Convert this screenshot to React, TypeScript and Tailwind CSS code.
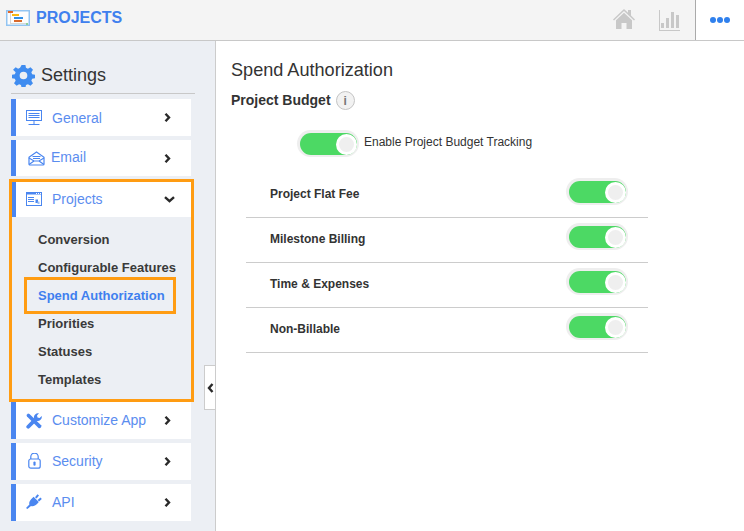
import type { ReactNode } from "react";

const Gantt = () => (
  <svg width="24" height="16" viewBox="0 0 24 16" className="shrink-0">
    <rect x="0.75" y="0.75" width="22.5" height="14.5" fill="#fdfdfd" stroke="#93c5f2" strokeWidth="1.5" />
    <rect x="2" y="1" width="5" height="2" fill="#e0672b" />
    <rect x="6" y="4" width="7" height="2" fill="#f7b916" />
    <rect x="8" y="7" width="9" height="2" fill="#2f8fe8" />
    <rect x="8" y="10" width="8" height="2" fill="#d9692b" />
    <rect x="4" y="3" width="1" height="10" fill="#d5d5d5" />
    <rect x="4" y="13" width="16" height="1" fill="#d5d9d5" />
    <rect x="20" y="13" width="2" height="2" fill="#8fd09a" />
  </svg>
);

const Monitor = () => (
  <svg width="16" height="15" viewBox="0 0 16 15" fill="none" stroke="#4a86f0">
    <rect x="0.5" y="0.5" width="15" height="10" strokeWidth="1" />
    <path d="M2.5 3.5h11M2.5 5.5h11M2.5 7.5h11M8 11v3M2.5 14.5h11" />
  </svg>
);

const Mail = () => (
  <svg width="17" height="15" viewBox="0 0 17 15" fill="none" stroke="#4a86f0" strokeWidth="1.2" className="ml-[4px]">
    <path d="M1 6.2 8.5 1 16 6.2V13a1 1 0 0 1-1 1H2a1 1 0 0 1-1-1Z" />
    <path d="M1 7 6 10h5l5-3M1 13.5 6 10M16 13.5 11 10M4.5 5.5h8M5 7.5h7" />
  </svg>
);

const Browser = () => (
  <svg width="16" height="14" viewBox="0 0 16 14" fill="none" stroke="#4a86f0" className="mb-[2px]">
    <rect x="0.5" y="0.5" width="15" height="13" />
    <path d="M0 1.5h16" strokeWidth="2" />
    <path d="M10 1.5h1M12 1.5h1M14 1.5h1" stroke="#fff" />
    <path d="M2 5.5h6M2 7.5h6M2 9.5h6" />
    <path d="M9.5 7.5h2.5v3.5h-2.5Z" fill="#4a86f0" stroke="none" />
    <path d="M11.5 9.5h2v2.5h-2Z" fill="#9cc0f5" stroke="none" />
  </svg>
);

const Tools = () => (
  <svg width="16" height="16" viewBox="0 0 16 16" fill="#4a86f0">
    <path d="M.5 2 2 .5l1.5.5 11.6 11.2a2 2 0 0 1-2.6 2.8L1 3.5Z" />
    <path d="M15.7 3 13.6 5 11.5 4.5 11 2.4 13 .3A4.2 4.2 0 0 0 8 5.3L.9 12.4a1.9 1.9 0 0 0 2.7 2.7l7.1-7.1A4.2 4.2 0 0 0 15.7 3Z" />
  </svg>
);

const Lock = () => (
  <svg width="13" height="16" viewBox="0 0 13 16" fill="none" stroke="#4a86f0" strokeWidth="1.2" className="mb-[1px]">
    <rect x="0.8" y="6" width="11.4" height="9.2" rx="2" />
    <path d="M2.8 6V3.8a3.7 3.7 0 0 1 7.4 0V6" />
    <path d="M6.5 9.5v2.2" strokeWidth="2.2" strokeLinecap="round" />
  </svg>
);

const Plug = () => (
  <svg width="16" height="15" viewBox="0 0 16 15" fill="#4a86f0" className="mb-[2px]">
    <path d="M0 14 3.4 10.6C2.8 8 4 6 7.6 2.8l5.2 5.2c-3 3.6-5.4 4.8-7.8 4.1L1.4 15Z" />
    <path d="M9 3.2 11.5 0.3 13 1.5 10.6 4.6ZM11.6 6 14.5 3.5 15.8 5 13.1 7.6Z" />
  </svg>
);

const ArrowRight = () => (
  <svg width="7" height="9" viewBox="0 0 7 9" fill="none" stroke="#2a2a2a" strokeWidth="2.4">
    <path d="M1.5 .8 5 4.5 1.5 8.2" />
  </svg>
);

const ArrowDown = () => (
  <svg width="11" height="7" viewBox="0 0 11 7" fill="none" stroke="#2a2a2a" strokeWidth="2.4">
    <path d="M1 1.2 5.5 5.2 10 1.2" />
  </svg>
);

const Row = ({
  icon,
  label,
  open,
  className = "h-[37px]",
  labelClass = "",
}: {
  icon: ReactNode;
  label: string;
  open?: boolean;
  className?: string;
  labelClass?: string;
}) => (
  <div className={`flex items-center border-[#4a86f0] bg-white ${className}`}>
    <span className="flex w-[36px] shrink-0 justify-center">{icon}</span>
    <span className={`text-[14px] text-[#5b8def] ${labelClass}`}>{label}</span>
    <span className={`ml-auto flex ${open ? "mr-[16px]" : "mr-[20px]"}`}>{open ? <ArrowDown /> : <ArrowRight />}</span>
  </div>
);

const Toggle = () => (
  <div className="h-[27px] w-[62px] rounded-full bg-[#eeeeee] pb-[2px] pl-[3px] pr-[2px] pt-[3px]">
    <div className="flex h-full items-center justify-end rounded-full bg-[#4cd964]">
      <div className="h-[21px] w-[21px] rounded-full border-[3px] border-white bg-[#efefef]" />
    </div>
  </div>
);

const subItems = ["Conversion", "Configurable Features", "Spend Authorization", "Priorities", "Statuses", "Templates"];
const budgetRows = ["Project Flat Fee", "Milestone Billing", "Time & Expenses", "Non-Billable"];

export default function App() {
  return (
    <div className="flex h-[531px] w-[744px] flex-col overflow-hidden bg-white font-['Liberation_Sans',sans-serif]">
      <header className="flex h-[41px] items-center border-b border-[#c8c8c8] bg-[#f4f4f4]">
        <div className="ml-[6px] mt-[-4px] flex items-center gap-[6px]">
          <Gantt />
          <span className="text-[16px] font-bold text-[#4080ee]">PROJECTS</span>
        </div>
        <div className="ml-auto flex h-full items-center">
          <svg width="22" height="20" viewBox="0 0 22 20" fill="#c8c8c8" className="mb-[2px] mr-[24px]">
            <path d="M11 0 15 3.8V1h3v5.6L22 10.5l-1 1L11 2 1 11.5l-1-1Z" />
            <path d="M11 3.8 19 11.3V20h-5.5v-6h-5v6H3v-8.7Z" />
          </svg>
          <svg width="21" height="21" viewBox="0 0 21 21" fill="#c8c8c8" className="mr-[15px]">
            <path d="M0 0h1v20h21v1H0Z" />
            <path d="M2 13h3v5H2ZM7 8h3v10H7ZM12 2h3v16h-3ZM17 5h3v13h-3Z" />
          </svg>
          <div className="flex h-full w-[49px] items-center justify-center gap-[1px] border-l border-[#aaa] bg-white">
            <span className="h-[6px] w-[6px] rounded-full bg-[#2f80ed]" />
            <span className="h-[6px] w-[6px] rounded-full bg-[#2f80ed]" />
            <span className="h-[6px] w-[6px] rounded-full bg-[#2f80ed]" />
          </div>
        </div>
      </header>

      <div className="flex flex-1">
        <aside className="relative w-[216px] shrink-0 border-r border-[#ccc] bg-[#eceff4] pl-[11px] pt-[21px]">
          <div className="mr-[20px] flex h-[32px] items-center gap-[6px] border-b border-[#c8c8c8] pb-[5px] pl-[1px]">
            <svg width="23" height="23" viewBox="0 0 24 24" fill="#3f8cf0">
              <path
                fillRule="evenodd"
                d="M10 1h4l.6 3 2 .9 2.7-1.6 2.6 2.8-1.7 2.5.8 2 3 .6v3.6l-3 .6-.8 2 1.7 2.6-2.6 2.7-2.7-1.6-2 .8-.6 3.1h-4l-.6-3.1-2-.8-2.6 1.6-2.7-2.7 1.7-2.6-.8-2-3-.6v-3.6l3-.6.8-2L1.1 6.1l2.7-2.8 2.6 1.6 2-.9ZM12 8a4 4 0 1 0 0 8 4 4 0 0 0 0-8Z"
              />
            </svg>
            <span className="text-[18px] text-[#333]">Settings</span>
          </div>
          <div className="mt-[5px] flex w-[180px] flex-col gap-[4px]">
            <Row icon={<Monitor />} label="General" className="h-[37px] border-l-[5px]" labelClass="pt-[1px]" />
            <Row icon={<Mail />} label="Email" className="h-[36px] border-l-[5px]" labelClass="mb-[2px] ml-[-1px]" />
          </div>

          <div className="ml-[-2px] mt-[3px] w-[185px] border-[3px] border-[#ff9c12]">
            <Row icon={<Browser />} label="Projects" open className="h-[35px] border-l-[4px]" />
            <ul className="pb-[5px] pt-[9px] text-[13px] font-bold text-[#3a3a3a]">
              {subItems.map((item) =>
                item === "Spend Authorization" ? (
                  <li
                    key={item}
                    className="-mb-[4px] -mt-[5px] ml-[12px] mr-[15px] flex h-[37px] items-center border-[3px] border-[#ff9c12] pl-[11px] text-[#3f7fef]"
                  >
                    {item}
                  </li>
                ) : (
                  <li key={item} className="flex h-[28px] items-center pl-[26px]">
                    {item}
                  </li>
                ),
              )}
            </ul>
          </div>

          <div className="flex w-[180px] flex-col gap-[4px]">
            <Row icon={<Tools />} label="Customize App" className="h-[37px] border-l-[5px]" />
            <Row icon={<Lock />} label="Security" className="h-[37px] border-l-[5px]" />
            <Row icon={<Plug />} label="API" className="h-[37px] border-l-[5px]" />
          </div>

          <div className="absolute left-[204px] top-[324px] flex h-[45px] w-[11px] items-center justify-center border border-r-0 border-[#ccc] bg-white">
            <svg width="7" height="10" viewBox="0 0 7 10" fill="none" stroke="#2a2a2a" strokeWidth="2.4">
              <path d="M5.5 1 2 5 5.5 9" />
            </svg>
          </div>
        </aside>

        <main className="flex-1 pl-[15px] pt-[18px] text-[#333]">
          <h1 className="text-[18.1px] leading-[22px] text-[#333]">Spend Authorization</h1>
          <div className="mt-[9px] flex items-center gap-[5px]">
            <span className="text-[14px] font-bold">Project Budget</span>
            <span className="flex h-[19px] w-[19px] items-center justify-center rounded-full border border-[#c4c4c4] bg-[#f2f2f2] text-[12px] font-bold text-[#777]">
              i
            </span>
          </div>
          <div className="ml-[66px] mt-[19px] flex items-center gap-[5px]">
            <Toggle />
            <span className="mb-[3px] text-[12px] text-[#333]">Enable Project Budget Tracking</span>
          </div>
          <div className="ml-[15px] mt-[16px] w-[402px]">
            {budgetRows.map((row) => (
              <div key={row} className="flex h-[45px] border-b border-[#ccc] pl-[24px] pr-[20px]">
                <span className="mt-[12px] text-[12px] font-bold text-[#333]">{row}</span>
                <div className="ml-auto mt-[5px]">
                  <Toggle />
                </div>
              </div>
            ))}
          </div>
        </main>
      </div>
    </div>
  );
}
